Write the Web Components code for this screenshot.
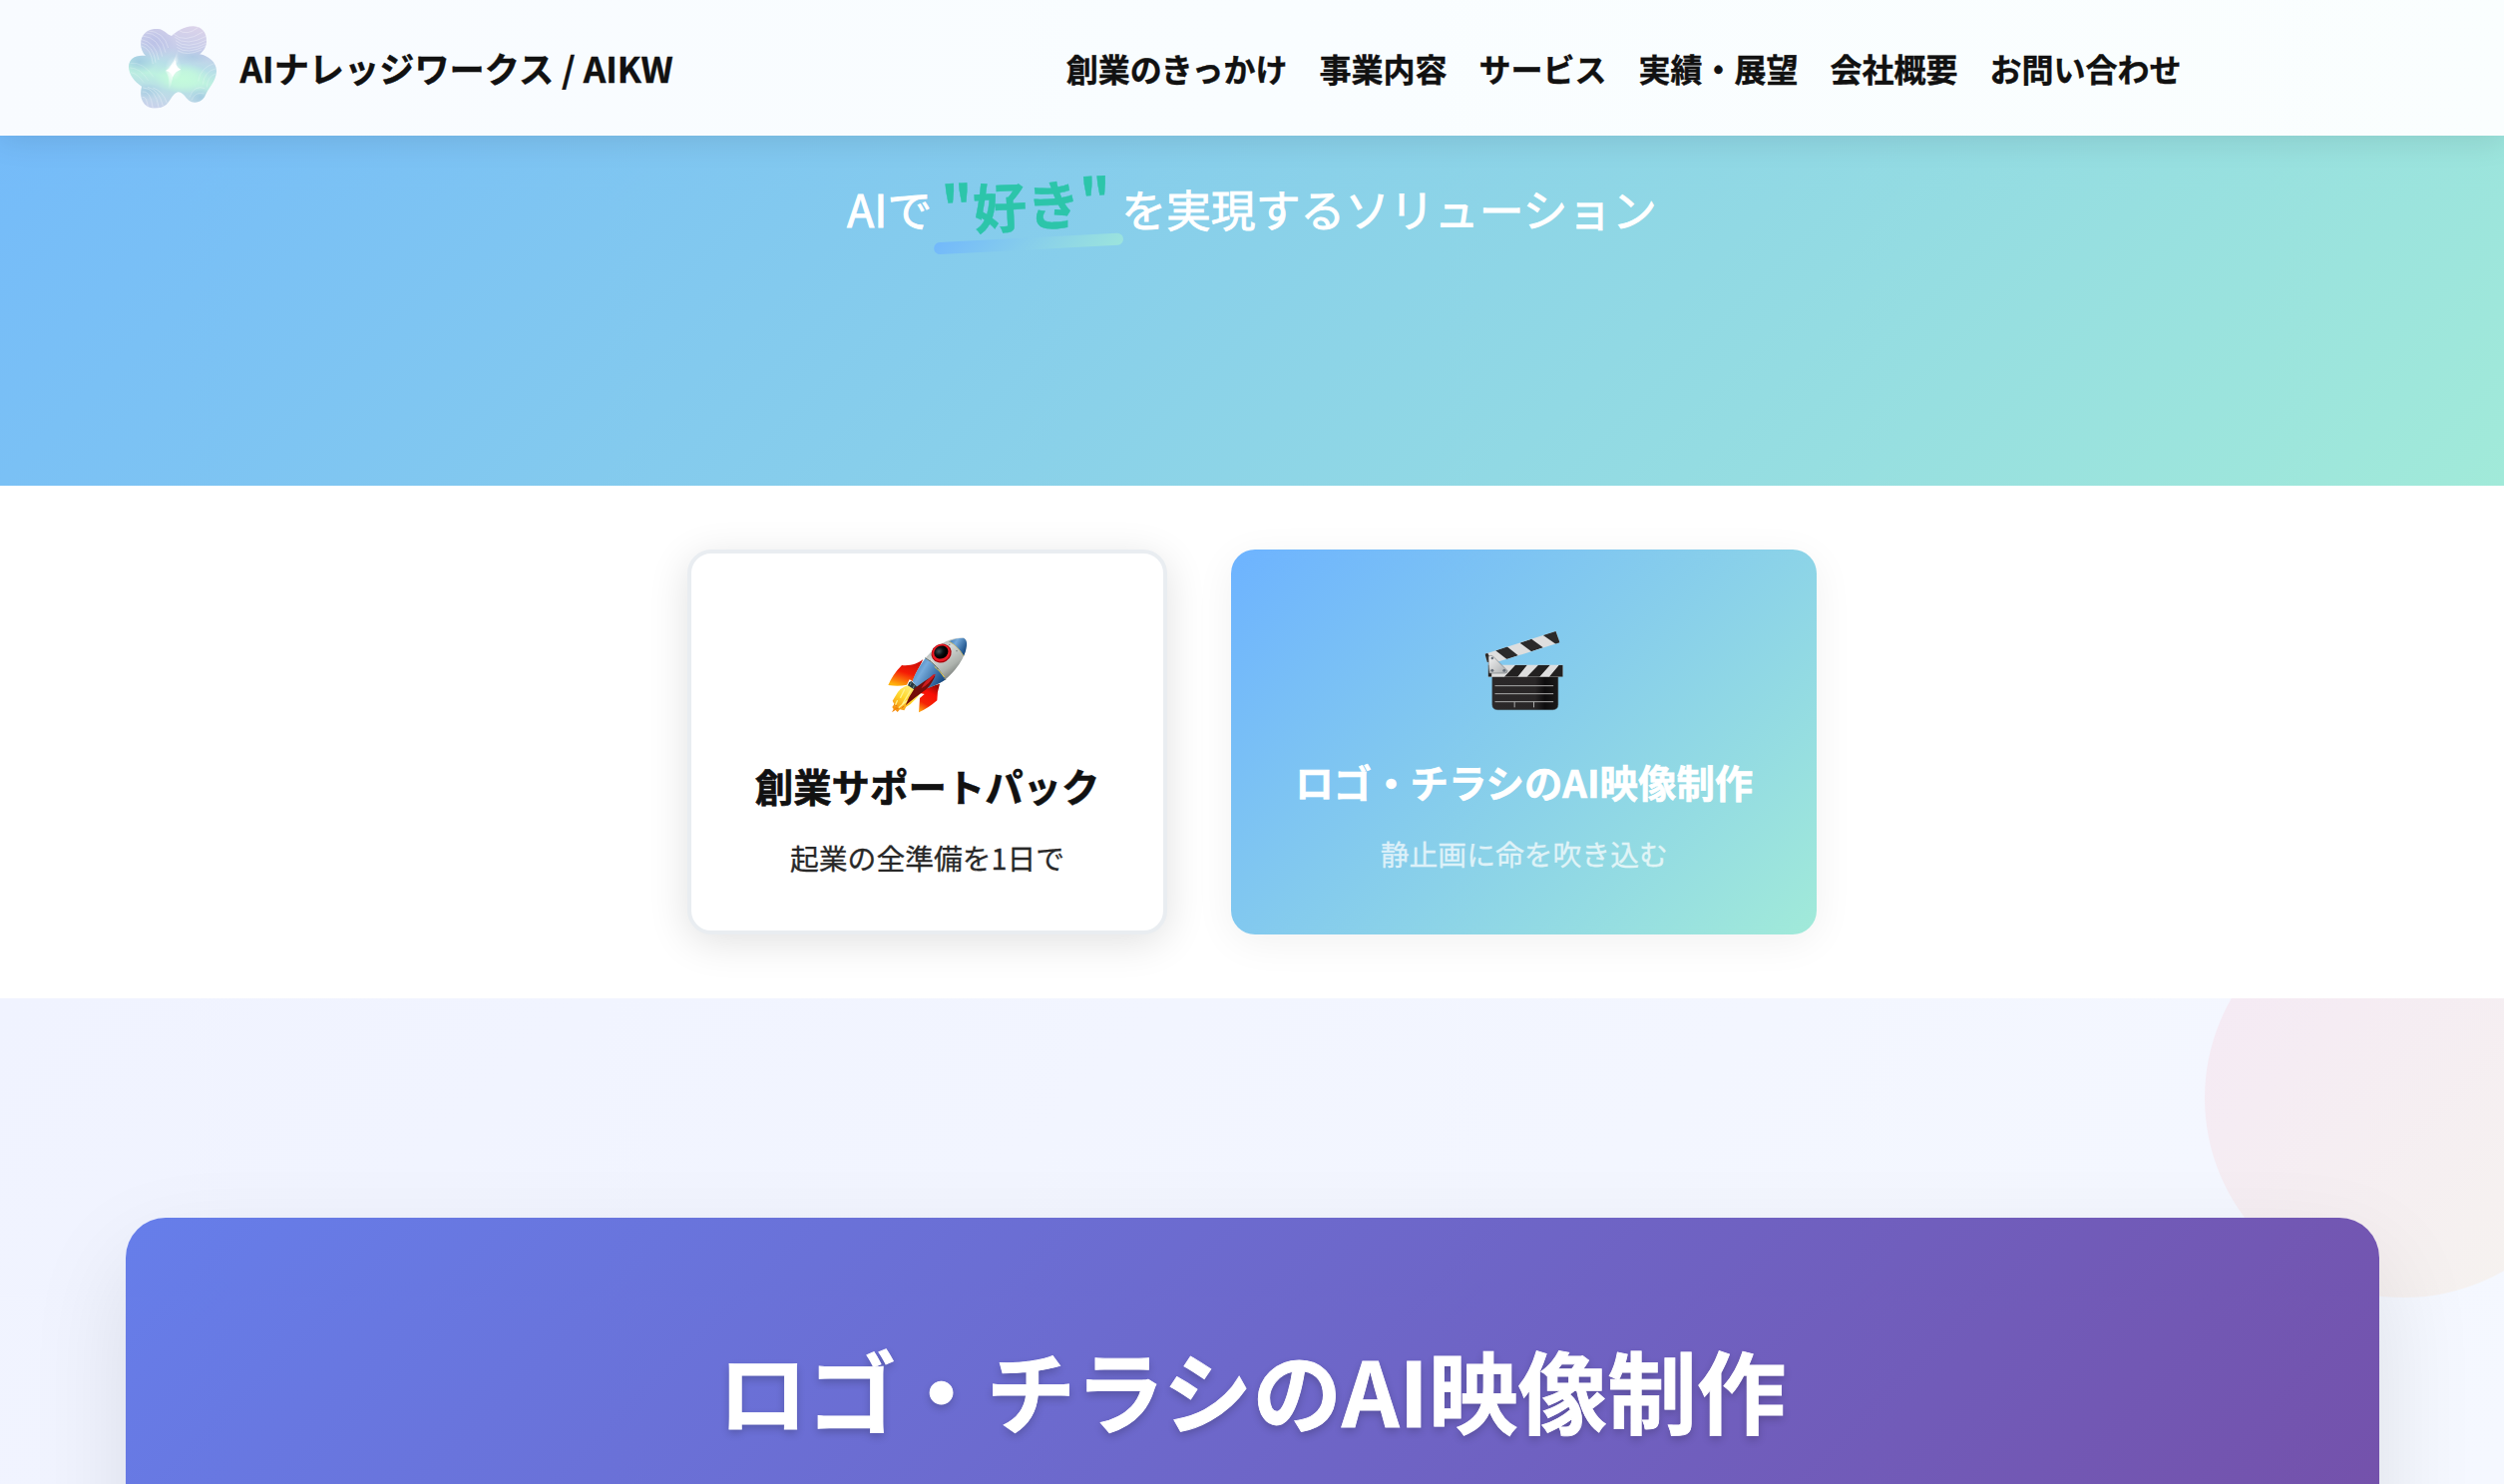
<!DOCTYPE html>
<html lang="ja">
<head>
<meta charset="utf-8">
<title>AIナレッジワークス / AIKW</title>
<style>
html{overflow:hidden}
body{margin:0;background:#fff;color:#111;font-family:"Noto Sans CJK JP","Noto Sans",sans-serif;height:1488px;overflow:hidden}
</style>
</head>
<body>
<site-page></site-page>
<script>
const define=(name,html)=>{
  const t=document.createElement('template');t.innerHTML=html;
  customElements.define(name,class extends HTMLElement{
    constructor(){super();this.attachShadow({mode:'open'}).append(t.content.cloneNode(true));}
  });
};

define('brand-logo',`<style>:host{display:block;width:96px;height:96px}svg{display:block}</style>
<svg width="96" height="96" viewBox="48 30 288 288">
<defs>
<linearGradient id="g" x1=".6" y1="0" x2=".4" y2="1"><stop offset="0" stop-color="#dcd3ea"/><stop offset=".28" stop-color="#c6cdea"/><stop offset=".46" stop-color="#b8dfe8"/><stop offset=".6" stop-color="#bdf1e0"/><stop offset=".74" stop-color="#b9dfe6"/><stop offset="1" stop-color="#cccfec"/></linearGradient>
<radialGradient id="m"><stop offset="0" stop-color="#c4fadc"/><stop offset=".5" stop-color="#c4fadc" stop-opacity=".75"/><stop offset="1" stop-color="#c4fadc" stop-opacity="0"/></radialGradient>
<radialGradient id="b"><stop offset="0" stop-color="#93bfdd" stop-opacity=".6"/><stop offset="1" stop-color="#93bfdd" stop-opacity="0"/></radialGradient>
<radialGradient id="v"><stop offset="0" stop-color="#b9bfe6" stop-opacity=".8"/><stop offset="1" stop-color="#b9bfe6" stop-opacity="0"/></radialGradient>
<radialGradient id="w"><stop offset="0" stop-color="#fff"/><stop offset="1" stop-color="#fff" stop-opacity="0"/></radialGradient>
<clipPath id="c"><path d="M186 78C200 65 225 48 252 49C280 50 293 72 291 98C289 115 280 125 270 133C300 138 322 160 321 185C320 215 295 235 285 262C275 280 250 282 238 272C225 262 222 248 205 247C190 250 185 270 170 285C150 300 115 300 102 280C92 265 92 250 96 230C75 215 57 195 57 170C58 145 80 134 108 138C95 125 90 105 96 85C105 62 125 56 145 57C162 58 172 74 186 78Z"/></clipPath>
</defs>
<g clip-path="url(#c)">
<rect x="48" y="40" width="290" height="270" fill="url(#g)"/>
<ellipse cx="135" cy="95" rx="60" ry="55" fill="url(#v)"/>
<ellipse cx="88" cy="156" rx="52" ry="36" fill="url(#b)"/>
<ellipse cx="250" cy="140" rx="56" ry="22" fill="url(#b)" opacity=".6"/>
<ellipse cx="112" cy="245" rx="48" ry="24" fill="url(#b)" opacity=".8"/>
<ellipse cx="272" cy="262" rx="36" ry="28" fill="url(#b)" opacity=".9"/>
<ellipse cx="218" cy="206" rx="84" ry="46" fill="url(#m)"/>
<g fill="none" stroke="#fff" stroke-width="1.8" opacity=".5">
<path d="M192 72q32 30 88-6M196 82q34 30 96-4M198 92q32 30 98-4M200 102q32 28 94-4M202 112q30 24 86-4M204 122q28 18 72-2M206 60q26 20 60-8"/>
<path d="M93 88q46 10 54 62M94 98q38 8 44 60M96 108q28 8 34 54M98 78q50 4 60 62M104 68q52 2 64 60M114 62q50 4 62 52"/>
<path d="M98 246q24-6 32 50M98 262q14-4 18 38M100 234q38 0 48 62M114 232q34 8 46 56M130 234q30 10 42 46"/>
<path d="M318 160q-44 10-52 54M320 176q-36 8-40 48M318 192q-24 8-26 40M240 262q14-38 46-26M246 272q10-28 38-20" opacity=".7"/>
<path d="M62 160q40-4 70 42M60 174q32 0 56 38M64 188q20 4 38 30" opacity=".6"/>
</g>
<path d="M208 100Q216 160 187 172Q196 205 176 245Q182 192 164 184Q196 168 208 100Z" fill="url(#w)"/>
<ellipse cx="192" cy="176" rx="26" ry="38" fill="url(#w)" opacity=".55"/>
</g>
<path d="M197 150Q199 174 214 179Q196 184 189 203Q188 186 168 183Q190 174 197 150Z" fill="#fff"/>
</svg>`);

define('nav-item',`<style>:host{display:block;font-size:32px;font-weight:700;line-height:48px;white-space:nowrap;color:#111;-webkit-text-stroke:.4px}</style><slot></slot>`);

define('site-header',`<style>
:host{display:flex;box-sizing:border-box;height:136px;width:100%;padding:0 323.5px 0 125.5px;align-items:center;justify-content:space-between;
background:linear-gradient(100deg,#f8fbff,#f9fdff 50%,#fafefe);box-shadow:0 4px 30px rgba(0,0,0,.1);position:relative;z-index:2}
.brand{display:flex;align-items:center;gap:19px;font-size:35.2px;font-weight:700;line-height:52px;white-space:nowrap;-webkit-text-stroke:.4px}
nav{display:flex;gap:32px}
</style>
<div class="brand"><brand-logo></brand-logo><span>AIナレッジワークス / AIKW</span></div>
<nav><nav-item>創業のきっかけ</nav-item><nav-item>事業内容</nav-item><nav-item>サービス</nav-item><nav-item>実績・展望</nav-item><nav-item>会社概要</nav-item><nav-item>お問い合わせ</nav-item></nav>`);

define('hero-banner',`<style>
:host{display:block;box-sizing:border-box;margin-top:-136px;padding-top:136px;height:487px;background:linear-gradient(135deg,#6db3ff,#87ceeb 50%,#a1ead9) bottom/100% 840px no-repeat;color:#fff}
p{margin:0;padding-top:29px;display:flex;justify-content:center;align-items:baseline;font-size:44.8px;line-height:80px;font-weight:400;white-space:nowrap;-webkit-text-stroke:.9px}
.em{display:block;position:relative;box-sizing:border-box;text-align:center;width:190px;font-size:53.76px;font-weight:700;color:#2cc5aa;transform:translateY(-.5px) rotate(-3deg);-webkit-text-stroke:.4px}
.em::after{content:"";position:absolute;left:0;right:0;bottom:-6px;height:12px;border-radius:6px;background:linear-gradient(135deg,#6db3ff,#87ceeb 50%,#a1ead9);opacity:.8}
</style><p><span>AIで</span><span class="em">"好き"</span><span>を実現するソリューション</span></p>`);

define('rocket-icon',`<style>:host{display:block;width:96px;height:96px}svg{display:block}</style>
<svg width="96" height="96" viewBox="66 12 288 288"><defs>
<linearGradient id="s" x1=".2" y1=".1" x2=".8" y2=".9"><stop offset="0" stop-color="#8e9698"/><stop offset=".35" stop-color="#d5d9d6"/><stop offset=".65" stop-color="#adb2ad"/><stop offset="1" stop-color="#4b504e"/></linearGradient>
<linearGradient id="n" x1="0" y1="0" x2="1" y2=".6"><stop offset="0" stop-color="#2c6ba6"/><stop offset=".4" stop-color="#76abdc"/><stop offset="1" stop-color="#164a83"/></linearGradient>
<linearGradient id="r" x1=".7" y1="0" x2=".3" y2="1"><stop offset="0" stop-color="#c80d08"/><stop offset=".5" stop-color="#f51b05"/><stop offset="1" stop-color="#ffb20c"/></linearGradient>
<linearGradient id="q" x1=".6" y1="0" x2=".2" y2="1"><stop offset="0" stop-color="#9c0905"/><stop offset=".3" stop-color="#fa0d05"/><stop offset=".7" stop-color="#f42406"/><stop offset="1" stop-color="#ff9f11"/></linearGradient>
<linearGradient id="f" x1=".8" y1="0" x2=".2" y2="1"><stop offset="0" stop-color="#fff48a"/><stop offset=".5" stop-color="#ffd92e"/><stop offset="1" stop-color="#f68a0b"/></linearGradient>
<radialGradient id="o" cx=".4" cy=".35"><stop offset="0" stop-color="#45545b"/><stop offset=".6" stop-color="#0c1115"/><stop offset="1" stop-color="#000"/></radialGradient></defs>
<path d="M196 123C182 135 158 144 132 141Q105 168 91 201Q123 206 147 200L155 184L165 190Z" fill="url(#r)"/>
<path d="M246 197Q216 205 190 213L184 224L200 228L186 240L183 283Q212 270 238 247Q238 220 246 197Z" fill="url(#q)"/>
<path d="M153 200Q125 208 114 232L104 248L109 258L103 267L107 273L102 283L113 276L119 282L126 274L139 277L145 266L158 258L180 236L189 224L173 208Z" fill="url(#f)"/>
<path d="M140 214L128 238M158 217L134 258M118 248L112 262M147 248L124 268" stroke="#fff08a" stroke-width="4" stroke-linecap="round"/>
<path d="M108 260L118 264M132 269L139 264M112 270L121 271" stroke="#e6750c" stroke-width="3"/>
<path d="M318 59C277 54 226 85 193 133C178 157 169 172 165 190L184 216C207 213 238 202 263 184C307 147 333 96 326 69Q324 61 318 59Z" fill="url(#s)"/>
<path d="M203 120Q235 137 262 185Q233 204 185 216L164 189Q175 157 203 120Z" fill="url(#n)"/>
<path d="M273 70Q291 60 318 59Q329 65 327 82Q325 98 318 114Q299 83 273 70Z" fill="url(#n)"/>
<path d="M202 119Q238 138 264 186" fill="none" stroke="#68736e" stroke-width="3"/><path d="M230 145Q248 159 260 177" fill="none" stroke="#e4c94b" stroke-width="3"/>
<path d="M275 70Q301 84 318 114" fill="none" stroke="#d3bd67" stroke-width="2.5"/>
<path d="M161 189L179 207L172 216L150 202L154 192Z" fill="#273b42"/><path d="M160 193L156 202M169 201L166 211" stroke="#71878b" stroke-width="3"/>
<path d="M230 170Q202 186 170 211Q153 235 143 262Q173 237 205 214Q220 200 232 174Z" fill="#750d09"/><path d="M234 169L227 169L205 188Q196 198 190 211Q211 202 234 169Z" fill="#ce1d20"/>
<ellipse cx="251" cy="105" rx="31" ry="28" fill="#a7060c" transform="rotate(-30 251 105)"/><ellipse cx="250" cy="104" rx="28" ry="25" fill="#ed1c25" transform="rotate(-30 250 104)"/><ellipse cx="250" cy="102" rx="22" ry="19" fill="url(#o)" transform="rotate(-30 250 102)"/>
<g fill="#6d706e"><circle cx="216" cy="127" r="2"/><circle cx="240" cy="151" r="2"/><circle cx="297" cy="98" r="2"/><circle cx="275" cy="79" r="2"/></g>
</svg>`);

define('clapper-icon',`<style>:host{display:block;width:96px;height:96px}svg{display:block}</style>
<svg width="96" height="96" viewBox="58.5 30 288 288"><defs>
<linearGradient id="k" x1="0" y1="0" x2="1" y2="0"><stop offset="0" stop-color="#2b2829"/><stop offset=".65" stop-color="#292627"/><stop offset=".8" stop-color="#0d0c0d"/><stop offset="1" stop-color="#1b1a1a"/></linearGradient>
<linearGradient id="p" x1="0" y1="0" x2="1" y2="1"><stop offset="0" stop-color="#f4f4f4"/><stop offset="1" stop-color="#a9acae"/></linearGradient>
<clipPath id="a"><path d="M84 137L297 69L309 103L126 160L91 162Z"/></clipPath><clipPath id="b"><path d="M94 170H318V206H94Z"/></clipPath></defs>
<path d="M106 203H304V289Q304 305 288 305H122Q106 305 106 289Z" fill="url(#k)" stroke="#3e4d55" stroke-width="1.5"/>
<g clip-path="url(#a)"><path d="M80 60H320V170H80Z" fill="#dedede"/><path d="M80 132L92 134L112 172H80ZM116 127L150 115L184 142L151 154ZM189 104L224 92L259 118L224 130ZM258 80L299 67L316 105L298 108Z" fill="#2b2a2a"/></g>
<path d="M94 170H318V200Q318 205 312 206H94Z" fill="#dedede"/>
<g clip-path="url(#b)"><path d="M90 166H104V206H90ZM176 170H211L182 206H142ZM245 170H280L248 206H210ZM307 170H320V206H277Z" fill="#222020"/></g>
<path d="M95 145Q101 140 108 144L151 187Q153 194 145 195H98Q94 168 95 145Z" fill="url(#p)" stroke="#777c80" stroke-width="2"/>
<g fill="#68707a"><circle cx="106" cy="150" r="4"/><circle cx="106" cy="187" r="4.5"/><circle cx="142" cy="187" r="4.5"/></g>
<path d="M114 233H290M114 257H290M114 281H290M173 281V298M231 281V298" stroke="#aaa" stroke-width="3"/>
</svg>`);

define('service-card',`<style>
:host{display:flex;box-sizing:border-box;flex-direction:column;align-items:center;border-radius:24px;padding:69px 64px 47px;white-space:nowrap;background:#fff;border:4px solid #e9edf1;box-shadow:0 8px 40px rgba(0,0,0,.12);color:#111}
:host([featured]){border:0;background:linear-gradient(135deg,#6db3ff,#87ceeb 50%,#a1ead9);color:#fff;box-shadow:0 8px 40px rgba(0,0,0,.06)}
h3{margin:39px 0 0;font-size:38.4px;line-height:56px;font-weight:700;-webkit-text-stroke:.6px}
p{margin:22px 0 0;font-size:28.8px;line-height:46px;opacity:.9;-webkit-text-stroke:.3px}
:host([featured]) p{opacity:.72}
</style><slot name="icon"></slot><h3><slot name="title"></slot></h3><p><slot></slot></p>`);

define('service-list',`<style>:host{display:flex;box-sizing:border-box;height:514px;padding:64px 0;gap:64px;justify-content:center;align-items:stretch}</style>
<service-card><rocket-icon slot="icon"></rocket-icon><span slot="title">創業サポートパック</span>起業の全準備を1日で</service-card>
<service-card featured><clapper-icon slot="icon"></clapper-icon><span slot="title">ロゴ・チラシのAI映像制作</span>静止画に命を吹き込む</service-card>`);

define('feature-section',`<style>
:host{display:block;box-sizing:border-box;position:relative;overflow:hidden;height:487px;padding:220px 125.5px 0;background:linear-gradient(135deg,#f0f3ff,#f5f8ff 2100px)}
.orb{position:absolute;top:-100px;right:-100px;width:400px;height:400px;border-radius:50%;background:linear-gradient(135deg,#ff6b9d,#feca57);opacity:.1}
.panel{box-sizing:border-box;position:relative;height:640px;border-radius:40px;padding-top:104px;text-align:center;background:linear-gradient(135deg,#667eea,#764ba2);box-shadow:0 40px 100px rgba(0,0,0,.1)}
h2{margin:0;color:#fff;font-size:89.6px;line-height:134px;font-weight:700;text-shadow:0 4px 8px rgba(0,0,0,.2);-webkit-text-stroke:.8px}
</style><div class="orb"></div><div class="panel"><h2>ロゴ・チラシのAI映像制作</h2></div>`);

define('site-page',`<style>:host{display:flex;flex-direction:column;width:2510px}</style><site-header></site-header><hero-banner></hero-banner><service-list></service-list><feature-section></feature-section>`);
</script>
</body>
</html>
